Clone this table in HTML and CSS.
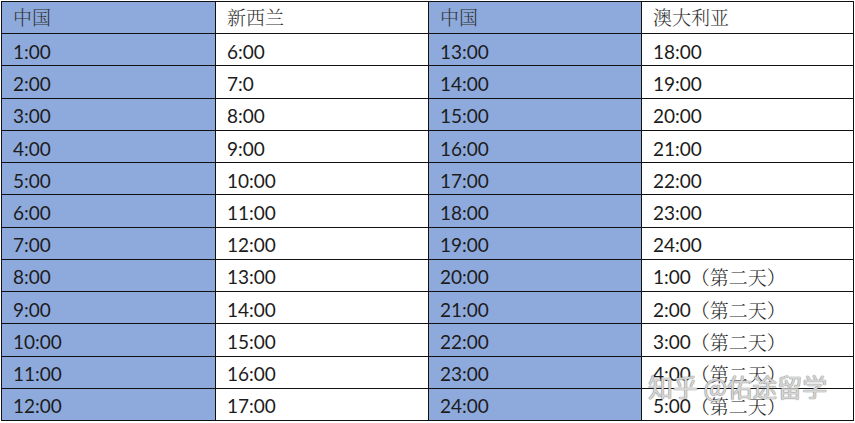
FILE: index.html
```html
<!DOCTYPE html>
<html lang="zh">
<head>
<meta charset="utf-8">
<link rel="stylesheet" href="styles.css">
</head>
<body>
<div class="page">
  <div class="grid">
    <div class="c b hd">中国</div><div class="c hd">新西兰</div><div class="c b hd">中国</div><div class="c hd">澳大利亚</div>
    <div class="c b">1:00</div><div class="c">6:00</div><div class="c b">13:00</div><div class="c">18:00</div>
    <div class="c b">2:00</div><div class="c">7:0</div><div class="c b">14:00</div><div class="c">19:00</div>
    <div class="c b">3:00</div><div class="c">8:00</div><div class="c b">15:00</div><div class="c">20:00</div>
    <div class="c b">4:00</div><div class="c">9:00</div><div class="c b">16:00</div><div class="c">21:00</div>
    <div class="c b">5:00</div><div class="c">10:00</div><div class="c b">17:00</div><div class="c">22:00</div>
    <div class="c b">6:00</div><div class="c">11:00</div><div class="c b">18:00</div><div class="c">23:00</div>
    <div class="c b">7:00</div><div class="c">12:00</div><div class="c b">19:00</div><div class="c">24:00</div>
    <div class="c b">8:00</div><div class="c">13:00</div><div class="c b">20:00</div><div class="c">1:00<span class="cn">（第二天）</span></div>
    <div class="c b">9:00</div><div class="c">14:00</div><div class="c b">21:00</div><div class="c">2:00<span class="cn">（第二天）</span></div>
    <div class="c b">10:00</div><div class="c">15:00</div><div class="c b">22:00</div><div class="c">3:00<span class="cn">（第二天）</span></div>
    <div class="c b">11:00</div><div class="c">16:00</div><div class="c b">23:00</div><div class="c">4:00<span class="cn">（第二天）</span></div>
    <div class="c b">12:00</div><div class="c">17:00</div><div class="c b">24:00</div><div class="c">5:00<span class="cn">（第二天）</span></div>
  </div>
  <div class="watermark">知乎 @佑途留学</div>
</div>
</body>
</html>
```
FILE: styles.css
```css
html, body {
  margin: 0;
  padding: 0;
  background: #ffffff;
}
.page {
  position: relative;
  width: 855px;
  height: 423px;
  padding: 1px 0 0 1px;
  box-sizing: border-box;
}
.grid {
  display: grid;
  grid-template-columns: 213px 212px 212px 211px;
  grid-template-rows: repeat(13, 1fr);
  gap: 1px;
  padding: 1px;
  width: 853px;
  height: 420px;
  box-sizing: border-box;
  background: #111111;
}
.c {
  background: #ffffff;
  display: flex;
  align-items: center;
  padding: 3px 0 0 11px;
  box-sizing: border-box;
  font-family: Lato, "Noto Sans CJK SC", sans-serif;
  font-size: 19px;
  color: #1c1c1c;
  white-space: nowrap;
}
.b {
  background: #8eaadc;
}
.hd {
  font-family: "Noto Serif CJK SC", "Noto Sans CJK SC", serif;
  font-size: 19px;
  color: #333333;
  padding-top: 0;
  padding-bottom: 3px;
  font-weight: 300;
}
.cn {
  font-family: "Noto Serif CJK SC", "Noto Sans CJK SC", serif;
  font-weight: 300;
  color: #2a2a2a;
}
.watermark {
  position: absolute;
  left: 648px;
  top: 368px;
  font-family: "Noto Sans CJK SC", sans-serif;
  font-size: 25px;
  color: rgba(240, 240, 240, 0.8);
  text-shadow: 0 0 1px #777, 0 0 1px #777;
  white-space: nowrap;
}
```
